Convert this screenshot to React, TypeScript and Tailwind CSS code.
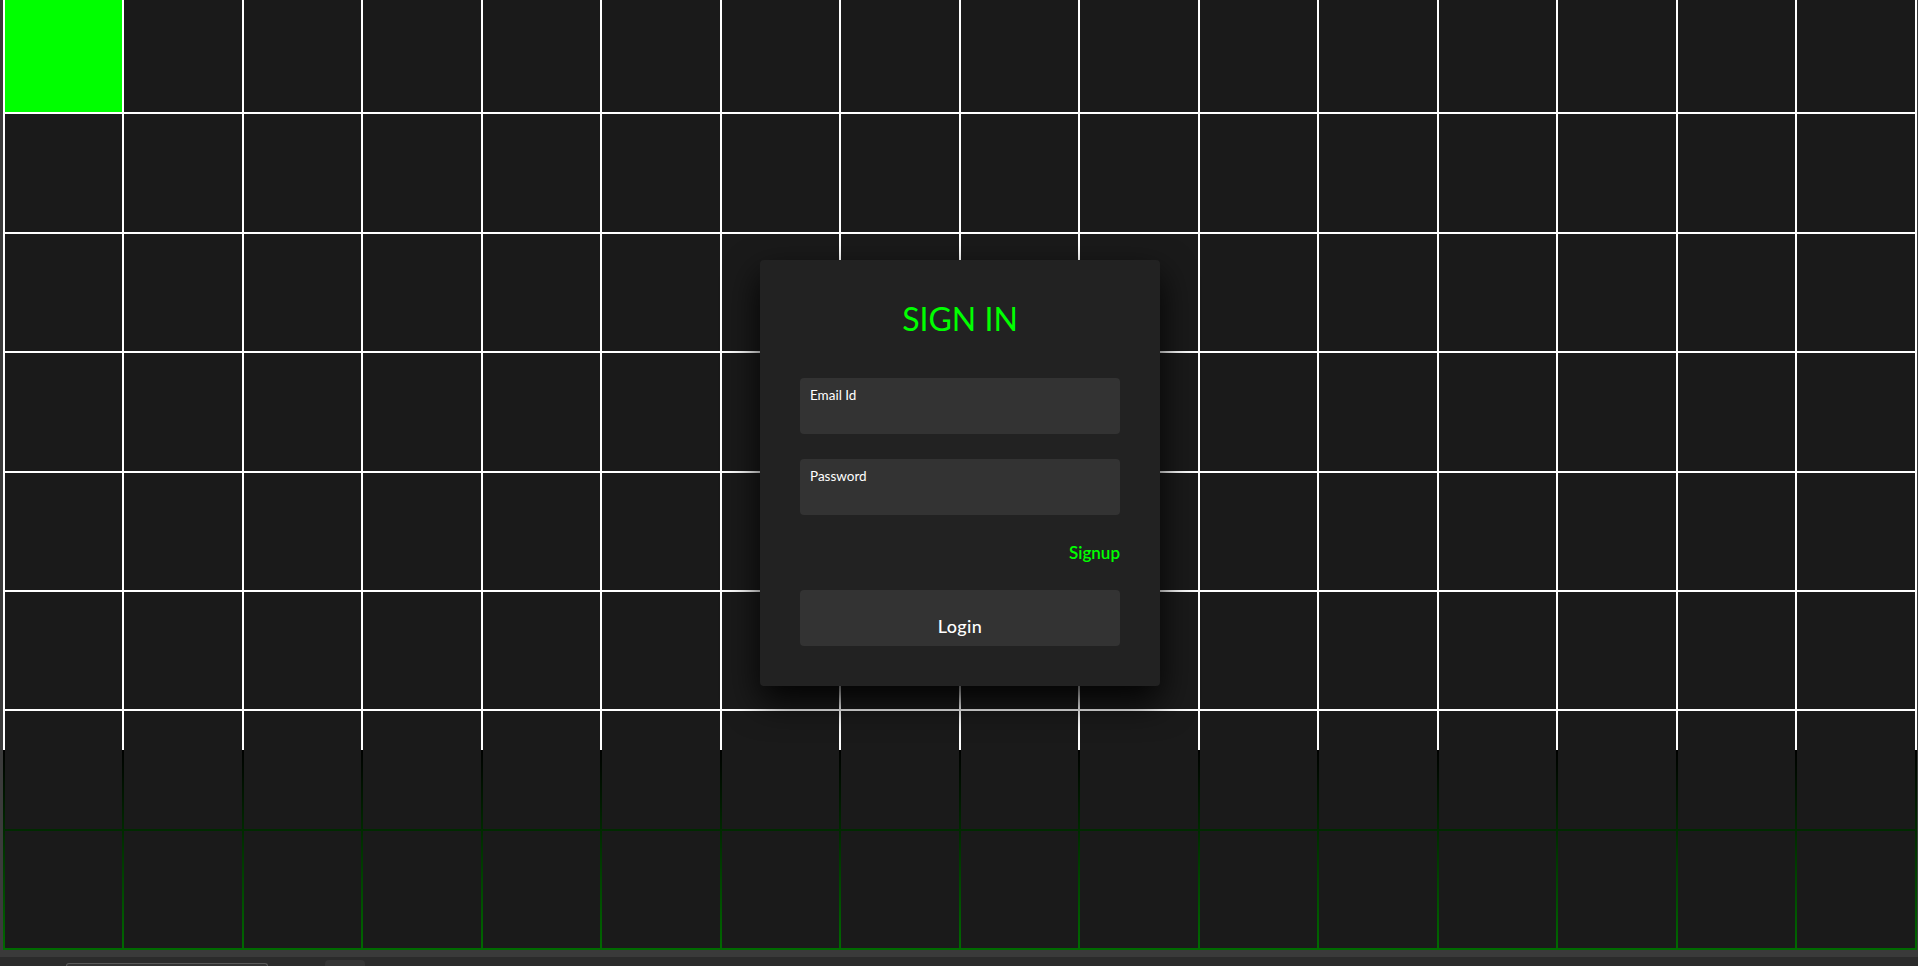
import React from "react";

export default function App() {
  const cells = Array.from({ length: 128 }, (_, i) => i);
  return (
    <div
      className="flex h-[966px] w-[1918px] flex-col overflow-hidden bg-[#3b3b3b]"
      style={{ fontFamily: "Lato, 'Noto Sans', sans-serif" }}
    >
      <div className="flex h-[950px] shrink-0">
        <div className="w-[3.3px] shrink-0" />
        <section className="relative h-[950px] w-[1913.5px] shrink-0 overflow-hidden bg-[linear-gradient(to_bottom,#fff_0px,#fff_750px,#000_750px,#006a00_950px)]">
          <div className="-mt-[5px] flex flex-wrap gap-[2px] pl-[1.7px]">
            {cells.map((i) => (
              <span
                key={i}
                className={
                  i === 0
                    ? "block h-[117.4px] w-[117.5px] bg-[#00ff00]"
                    : "block h-[117.4px] w-[117.5px] bg-[#1a1a1a]"
                }
              />
            ))}
          </div>
          <div className="absolute left-[756.7px] top-[260px] flex w-[400px] flex-col gap-[40px] rounded-[4px] bg-[#222222] p-[40px] shadow-[0_15px_35px_rgba(0,0,0,0.9)]">
            <h2 className="text-center text-[32px] font-normal leading-[38px] text-[#00ff00]">
              SIGN IN
            </h2>
            <div className="flex flex-col gap-[25px]">
              <div className="relative h-[56px] rounded-[4px] bg-[#333333]">
                <span className="absolute left-[10px] top-[9px] text-[13.5px] leading-[16px] text-white">
                  Email Id
                </span>
              </div>
              <div className="relative h-[56px] rounded-[4px] bg-[#333333]">
                <span className="absolute left-[10px] top-[9px] text-[13.5px] leading-[16px] text-white">
                  Password
                </span>
              </div>
              <div className="flex h-[25px] justify-end">
                <span className="text-[17px] font-semibold leading-[25px] text-[#00ff00]">
                  Signup
                </span>
              </div>
              <div className="flex h-[56px] justify-center rounded-[4px] bg-[#333333] pt-[25px]">
                <span className="text-[18px] font-medium leading-[23.5px] tracking-[0.02em] text-white">
                  Login
                </span>
              </div>
            </div>
          </div>
        </section>
        <div className="flex-1" />
      </div>
      <div className="h-[7px] shrink-0 bg-[#3a3a3a]" />
      <div className="relative flex h-[9px] shrink-0 items-end bg-[#2b2b2b]">
        <div className="ml-[66px] h-[3px] w-[202px] rounded-t-[6px] border-x border-t border-[#5a5a5a] bg-[#333333]" />
        <div className="ml-[57px] h-[6px] w-[40px] rounded-t-[4px] bg-[#353535]" />
      </div>
    </div>
  );
}
